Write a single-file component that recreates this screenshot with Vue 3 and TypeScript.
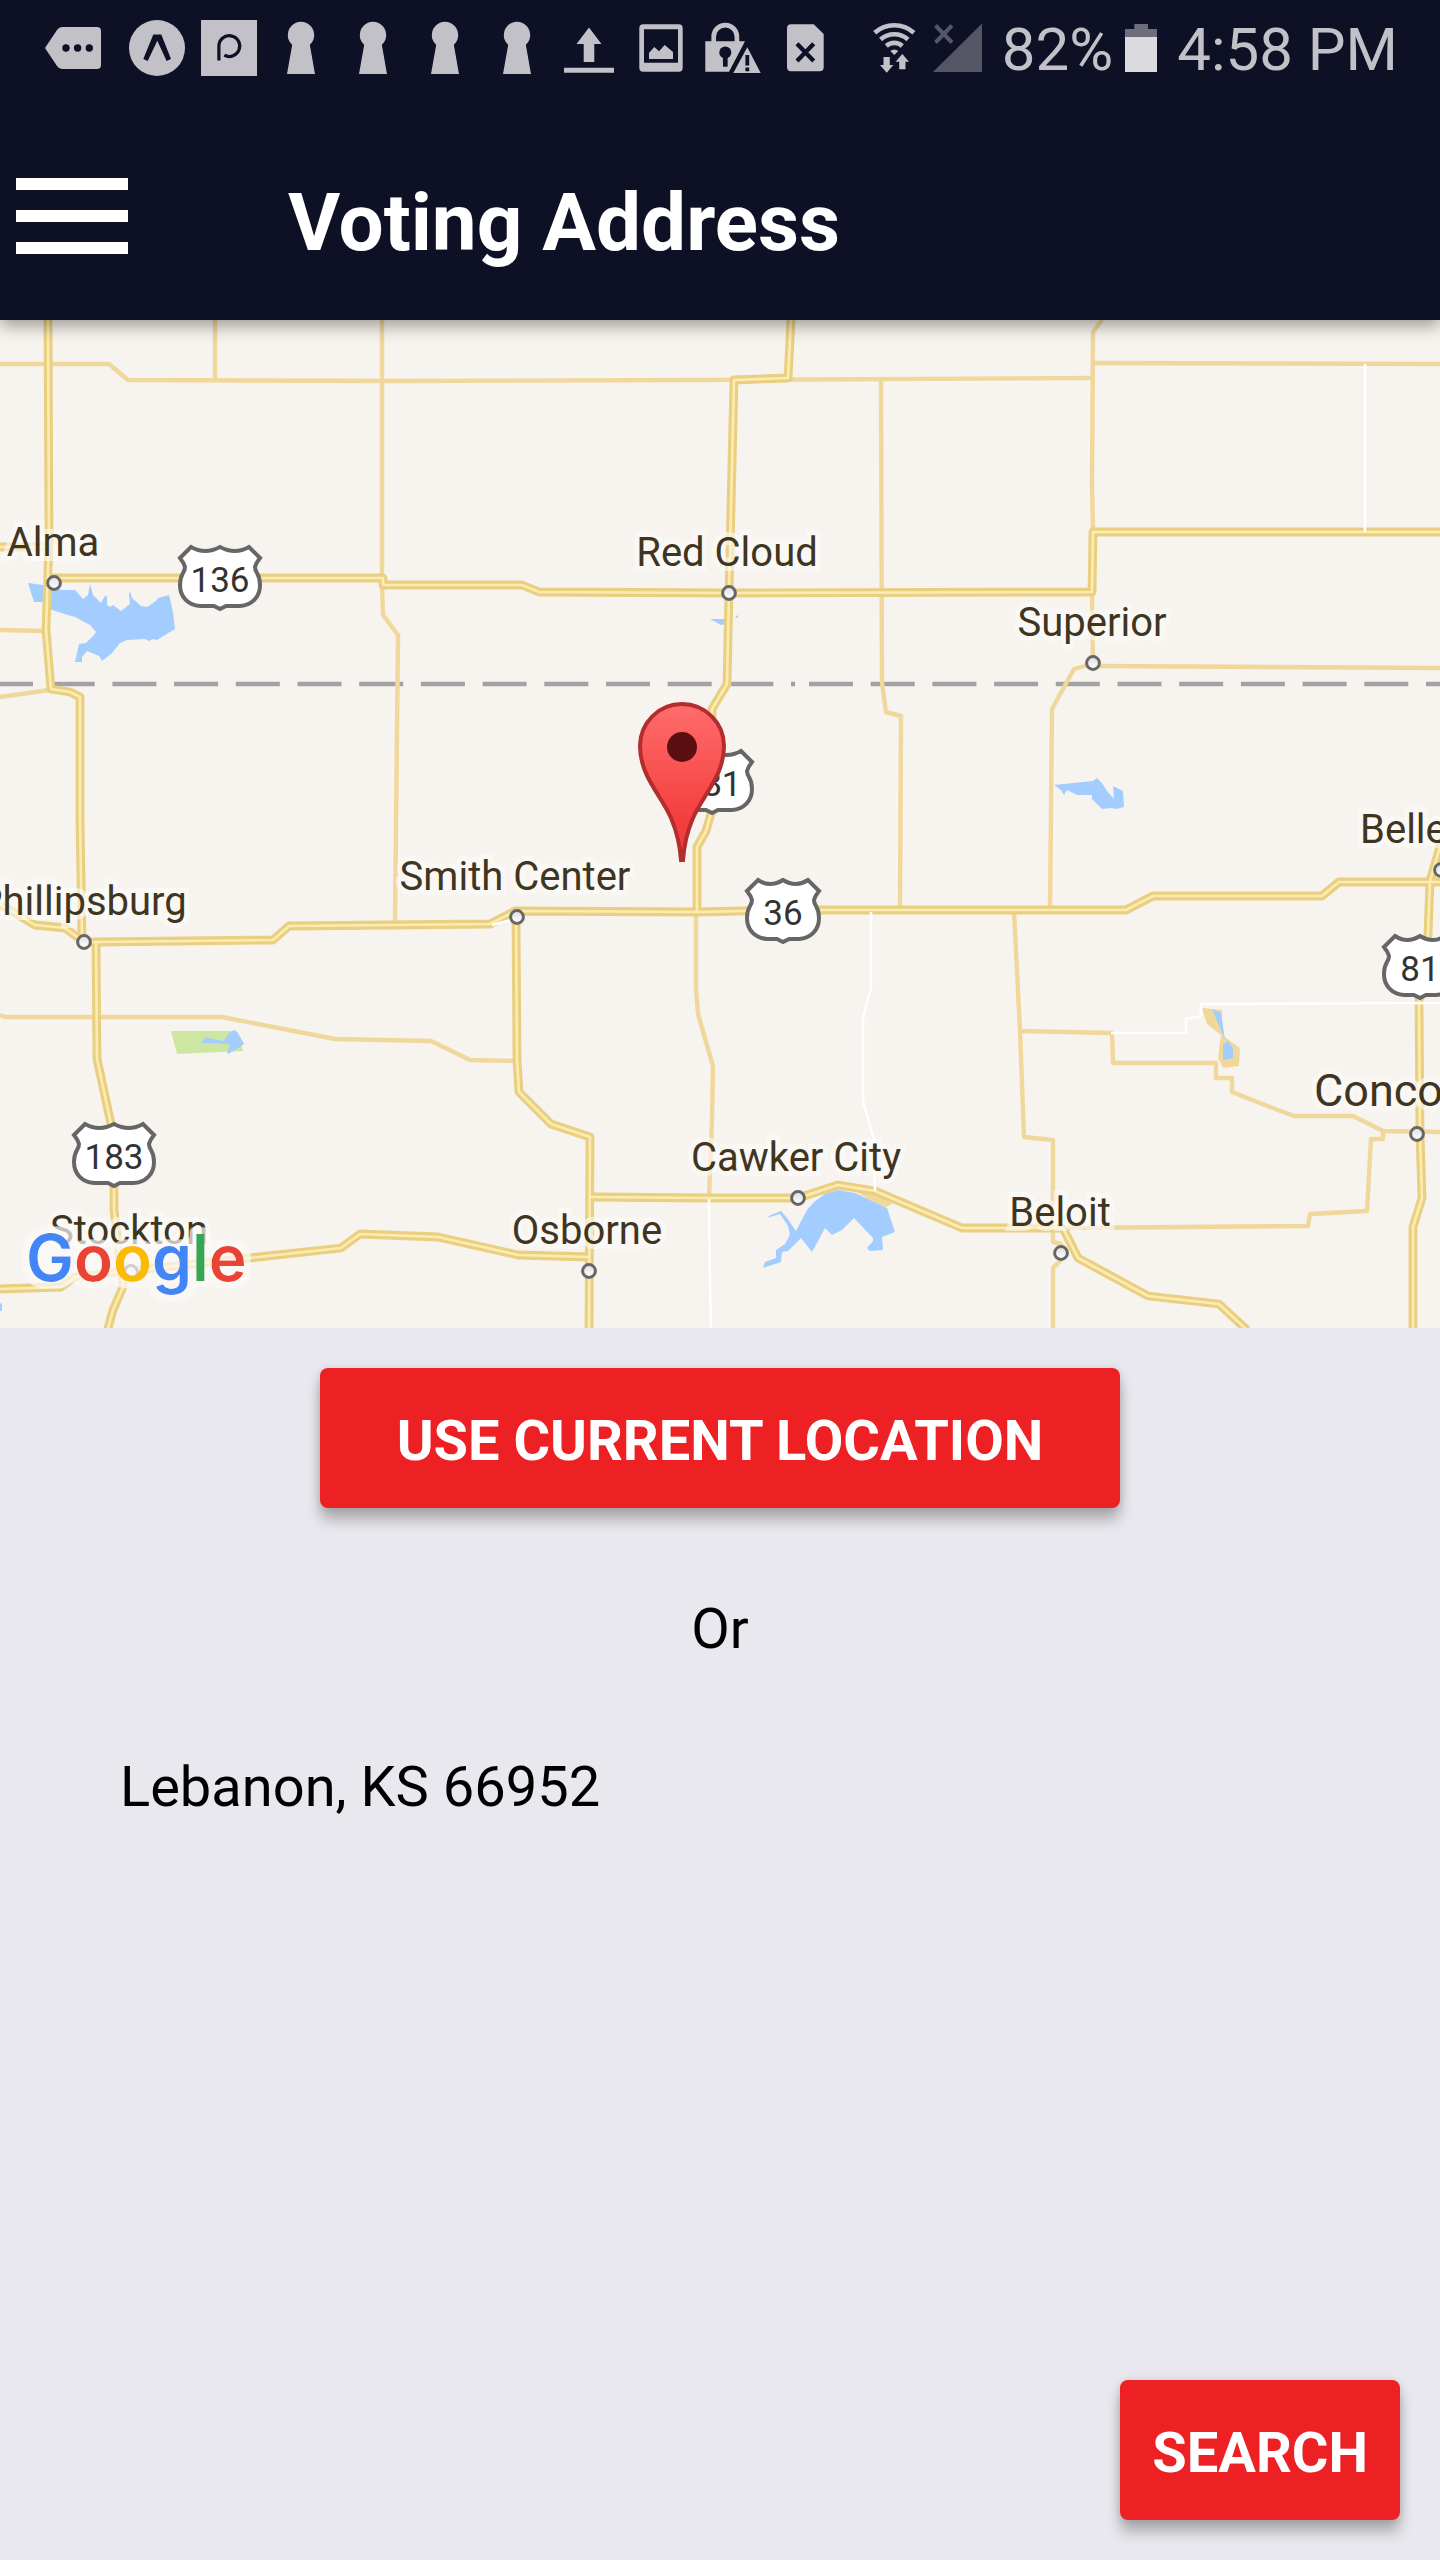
<script setup lang="ts">
import { ref } from 'vue'

interface Town {
  name: string
  x: number
  y: number
  dotX: number
  dotY: number
  anchor?: 'start' | 'middle'
  large?: boolean
}

interface Shield {
  route: string
  x: number
  y: number
}

const address = ref('Lebanon, KS 66952')

const towns: Town[] = [
  { name: 'Alma', x: 53, y: 236, dotX: 54, dotY: 263 },
  { name: 'Red Cloud', x: 727, y: 246, dotX: 729, dotY: 273 },
  { name: 'Superior', x: 1092, y: 316, dotX: 1093, dotY: 343 },
  { name: 'Phillipsburg', x: 82, y: 595, dotX: 84, dotY: 622 },
  { name: 'Smith Center', x: 515, y: 570, dotX: 517, dotY: 597 },
  { name: 'Osborne', x: 587, y: 924, dotX: 589, dotY: 951 },
  { name: 'Cawker City', x: 796, y: 851, dotX: 798, dotY: 878 },
  { name: 'Beloit', x: 1060, y: 906, dotX: 1061, dotY: 933 },
  { name: 'Stockton', x: 129, y: 924, dotX: 131, dotY: 952 },
  { name: 'Belleville', x: 1360, y: 523, dotX: 1441, dotY: 550, anchor: 'start' },
  { name: 'Concordia', x: 1314, y: 786, dotX: 1417, dotY: 814, anchor: 'start', large: true },
]

const shields: Shield[] = [
  { route: '136', x: 220, y: 258 },
  { route: '281', x: 712, y: 462 },
  { route: '36', x: 783, y: 591 },
  { route: '183', x: 114, y: 835 },
  { route: '81', x: 1420, y: 647 },
]

const highways: string[] = [
  'M48 0L49 220L46 310L51 369L70 372L80 377V500L82 618',
  'M0 227H48',
  'M49 258H383V265H522L539 272L730 273L1092 272L1093 212H1440',
  'M791 0L788 58L734 60L729 272L727 364L712 389V490L706 511L697 527V591',
  'M0 584L35 605L65 608L84 622H95L273 620L289 606L490 604L515 591L700 592L783 590L1126 590L1153 576H1322L1339 562H1440',
  'M96 622L97 739L114 818V890L123 967L113 990L107 1012',
  'M0 969L61 967L75 957L341 928L360 914L438 917L518 935L589 937',
  'M516 597L517 740L519 772L551 804L590 817L589 1012',
  'M591 877L710 878H798L838 865L875 871L962 908H1063L1078 938L1148 976L1219 984L1247 1010',
  'M1442 520L1430 561L1427 640L1419 680L1420 815L1422 878L1413 907V1012',
]

const roads: string[] = [
  'M0 44H109L128 60L400 61L700 60L1093 58',
  'M215 0V61',
  'M382 0V265L383 295L398 315L395 602',
  'M0 310L46 311',
  'M0 377L49 370',
  'M881 58L882 363L886 392L901 396L900 590',
  'M1102 0L1093 12L1092 165L1093 212L1092 272L1093 343',
  'M1093 43L1440 44',
  'M1440 348L1100 346L1085 346L1074 349L1052 389L1050 590',
  'M0 695L5 697H222L335 719L431 721L470 740L517 741',
  'M696 592V668L698 694L713 746L712 800L709 878',
  'M1014 591L1020 711L1024 817L1053 820V922L1061 924L1061 940L1053 948V1008',
  'M1020 711L1112 713L1113 743H1216V758H1232V772L1270 787L1294 796H1353L1383 811L1440 812',
  'M1383 811V819H1371L1367 891L1310 894L1308 906L1064 908',
]

const lanes: string[] = [
  'M1365 44V212',
  'M492 605L511 600',
  'M709 879L710 960L711 1008',
  'M871 592V668L863 697V781L874 820L875 871',
  'M1111 713H1186V699L1201 696V684L1440 683',
]

// Outline of a US route shield around the origin; the sides move out for three digits.
function shieldPath(route: string): string {
  const w = route.length > 2 ? 40 : 36
  const c = w - 11
  const m = Math.round(c / 2)
  return (
    `M0-31Q${-m}-23 ${-c}-31L${-w}-20Q${4 - w}-15 ${5 - w}-11Q${5 - w}-8 ${3 - w}-5` +
    `Q${-w} 0 ${-w} 7C${-w} 19 ${8 - w} 27 ${20 - w} 28H-6L0 31L6 28H${w - 20}` +
    `C${w - 8} 27 ${w} 19 ${w} 7Q${w} 0 ${w - 3}-5Q${w - 5}-8 ${w - 5}-11Q${w - 4}-15 ${w}-20L${c}-31Q${m}-23 0-31Z`
  )
}
</script>

<template>
  <div class="screen">
    <header class="top">
      <div class="status">
        <div class="status-left">
          <svg class="icon message" viewBox="0 0 56 56" aria-hidden="true">
            <path d="M0 28L12 10Q14 7 17 7H52q4 0 4 4V45q0 4-4 4H17q-3 0-5-3Z" />
            <g class="cut"><circle cx="21" cy="28" r="3.7" /><circle cx="32.6" cy="28" r="3.7" /><circle cx="44.3" cy="28" r="3.7" /></g>
          </svg>
          <svg class="icon" viewBox="0 0 56 56" aria-hidden="true">
            <circle cx="28" cy="28" r="28" />
            <path class="cut" d="M24.3 14.5h8L42 39l-4.4 2L28.3 20.7L18.7 41l-4.4-2Z" />
          </svg>
          <svg class="icon" viewBox="0 0 56 56" aria-hidden="true">
            <path d="M0 0H56V56H0Z" />
            <path class="cut-line" stroke-width="3.2" d="M17.9 40.5V26.3a10.4 10.4 0 1 1 5.4 8.9" />
          </svg>
          <svg v-for="n in 4" :key="n" class="icon" viewBox="0 0 56 56" aria-hidden="true">
            <circle cx="28" cy="15" r="13.2" />
            <path d="M19.7 22H36.3L42 54H14Z" />
          </svg>
          <svg class="icon" viewBox="0 0 56 56" aria-hidden="true">
            <path d="M28 7.5L40.5 24H33.3V42H22.7V24H15.5ZM3 47.7H53v5H3Z" />
          </svg>
          <svg class="icon" viewBox="0 0 56 56" aria-hidden="true">
            <path fill-rule="evenodd" d="M10.3 4.3H45.7q4 0 4 4V47.7q0 4-4 4H10.3q-4 0-4-4V8.3q0-4 4-4ZM11 9.3V42.7H45V9.3Z" />
            <path d="M16 39V33l5.3-6L26 31.3L31.7 25L40 32V39Z" />
          </svg>
          <svg class="icon" viewBox="0 0 56 56" aria-hidden="true">
            <path d="M.3 21.3H40L24 51.7H.3ZM42.3 27.3L55.7 53H28.3Z" />
            <path class="line" stroke-width="4.7" d="M8.7 22V16.7a11.6 11.6 0 0 1 23.2 0V22" />
            <circle class="cut" cx="20.3" cy="32.5" r="6" />
            <path class="cut-line" stroke-width="4.7" d="M20.3 33V46.7" />
            <path class="cut-line" stroke-width="3.8" d="M42.3 35V45.5M42.3 47.5V51.2" />
          </svg>
          <svg class="icon" viewBox="0 0 56 56" aria-hidden="true">
            <path d="M14 4.3H36.7L46.7 14V47.3q0 4-4 4H14q-4 0-4-4V8.3q0-4 4-4Z" />
            <path class="cut-line" stroke-width="4.3" d="M20 23.7L36.7 41M36.7 23.7L20 41" />
          </svg>
        </div>
        <div class="status-right">
          <div class="network">
            <svg class="icon wifi" viewBox="0 0 44 56" aria-hidden="true">
              <path class="line" stroke-width="4.6" d="M1.7 12.7A29.7 29.7 0 0 1 40.9 12.7M7.6 19.4A20.8 20.8 0 0 1 35 19.4M13.3 25.9A12.2 12.2 0 0 1 29.3 25.9" />
              <path d="M21.3 35L17.3 31Q21.3 28 25.3 31ZM10.5 37H16.8V45H20.4L13.7 52.7L7 45H10.5ZM29.3 34L36 41.7H32.5V49.3H26.2V41.7H22.6Z" />
            </svg>
            <svg class="icon signal" viewBox="0 0 49 56" aria-hidden="true">
              <path d="M0 52L49 3.5V52Z" />
              <path class="no-data" d="M2.5 5.5L19 22.5M19 5.5L2.5 22.5" />
            </svg>
          </div>
          <div class="charge">
            <span class="reading">82%</span>
            <svg class="icon battery" viewBox="0 0 32 56" aria-hidden="true">
              <path class="empty" d="M9.3 4H23V9H32V17H0V9H9.3Z" />
              <path class="full" d="M0 17H32V52H0Z" />
            </svg>
          </div>
          <span class="reading">4:58 PM</span>
        </div>
      </div>
      <div class="bar">
        <button class="menu" type="button" aria-label="Menu">
          <svg viewBox="0 0 112 76" aria-hidden="true"><path d="M0 0H112V12H0ZM0 32H112V44H0ZM0 64H112V76H0Z" /></svg>
        </button>
        <h1>Voting Address</h1>
      </div>
    </header>

    <svg class="map" viewBox="0 0 1440 1008" preserveAspectRatio="xMidYMid slice" role="img" aria-label="Map around Lebanon, Kansas">
      <defs>
        <linearGradient id="pin-fill" x1="0" y1="0" x2="0" y2="1">
          <stop offset="0" stop-color="#ff6c6c" />
          <stop offset="0.75" stop-color="#f43e3e" />
          <stop offset="1" stop-color="#f43a3a" />
        </linearGradient>
        <linearGradient id="dot-fill" x1="0" y1="0" x2="0" y2="1">
          <stop offset="0" stop-color="#dedede" />
          <stop offset="1" stop-color="#ffffff" />
        </linearGradient>
        <filter id="logo-halo" x="-20%" y="-20%" width="140%" height="140%">
          <feMorphology in="SourceAlpha" operator="dilate" radius="6" />
          <feGaussianBlur stdDeviation="2" />
          <feComponentTransfer result="edge"><feFuncA type="linear" slope="4" intercept="-1" /></feComponentTransfer>
          <feFlood flood-color="#fbfaf8" flood-opacity="0.7" />
          <feComposite in2="edge" operator="in" result="halo" />
          <feMerge><feMergeNode in="halo" /><feMergeNode in="SourceGraphic" /></feMerge>
        </filter>
      </defs>

      <g class="border">
        <path d="M-11 364H775" />
        <path d="M791 364H795" />
        <path d="M809 364H1440" />
      </g>

      <path class="park" d="M171 711H237L243 731L177 734Z" />
      <path class="sand" d="M1202 688L1222 690V715L1240 728L1239 746L1223 748L1218 738L1221 715L1207 704ZM850 868L876 871L892 884L886 887L870 880Z" />
      <g class="water">
        <path d="M28 263L43 265L62 270H75L83 279L88 275L90 264L93 275L101 283L105 276H107V285L110 287L113 285L121 291L130 284L129 275L130 271L132 278L141 286L147 287L156 281L158 278L169 275L173 292L175 309L165 315L157 320L153 319L149 321L145 319L127 320L120 323L112 333L102 341L99 336L87 331L82 337V342H75L79 324L86 323L93 316L96 312L90 305L75 297L68 295L52 290L43 282H34Z" />
        <path d="M710 299H727V304L721 305ZM735 297L738 295V298Z" />
        <path d="M1054 465L1073 463L1093 461L1097 458L1102 463L1107 471L1114 479L1113 466L1123 471L1124 487L1116 489L1111 488L1102 489L1092 479V475H1077L1067 470L1064 475L1061 470Z" />
        <path d="M201 723L206 717L213 719L224 721L229 713L234 710L238 713L244 724L235 730L228 734L227 733L230 724Z" />
        <path d="M825 874L838 870L855 873L887 888L895 912L882 917L883 930L870 931L867 928L873 921V918L854 898L842 910L832 915L825 908L812 932L801 918L788 931L782 932L781 942L763 948L765 942L776 938V930L785 924L790 915L788 906L780 894L767 898L771 895L781 891L787 898L796 911L807 890L814 882Z" />
        <path d="M1212 689L1221 693L1225 720ZM1223 725L1228 721L1233 728V738L1223 740ZM0 983L2 984V991H0Z" />
      </g>

      <g class="road"><path v-for="d in roads" :key="d" :d="d" /></g>
      <g class="highway"><path v-for="d in highways" :key="d" :d="d" /></g>
      <g class="highway-center"><path v-for="d in highways" :key="d" :d="d" /></g>
      <g class="lane"><path v-for="d in lanes" :key="d" :d="d" /></g>

      <g v-for="shield in shields" :key="shield.route" :transform="`translate(${shield.x} ${shield.y})`">
        <path class="shield" :d="shieldPath(shield.route)" />
        <text class="route" x="0" y="14">{{ shield.route }}</text>
      </g>

      <g v-for="town in towns" :key="town.name">
        <circle class="dot" :cx="town.dotX" :cy="town.dotY" r="6.4" />
        <text
          class="town"
          :class="{ large: town.large }"
          :x="town.x"
          :y="town.y"
          :text-anchor="town.anchor ?? 'middle'"
        >{{ town.name }}</text>
      </g>

      <path class="pin" d="M640 426a42 42 0 0 1 84 0C724 456 703 475 693 498C687 512 684 526 683 540H681C680 526 677 512 671 498C661 475 640 456 640 426Z" />
      <circle class="pin-hole" cx="682" cy="427" r="15" />

      <text class="logo" x="26" y="961" filter="url(#logo-halo)"><tspan fill="#4285f4">G</tspan><tspan fill="#ea4335">o</tspan><tspan fill="#fbbc05">o</tspan><tspan fill="#4285f4">g</tspan><tspan fill="#34a853">l</tspan><tspan fill="#ea4335">e</tspan></text>
    </svg>

    <main class="form">
      <button class="action locate" type="button">USE CURRENT LOCATION</button>
      <p class="or">Or</p>
      <input v-model="address" class="address" type="text" aria-label="Voting address" />
      <button class="action search" type="button">SEARCH</button>
    </main>
  </div>
</template>

<style>
body {
  background: #e9e8ee;
}
</style>

<style scoped>
.screen {
  display: flex;
  flex-direction: column;
  min-height: 100vh;
  background: #e9e8ee;
  font-family: Roboto, "Liberation Sans", sans-serif;
}

.top {
  position: relative;
  z-index: 1;
  background: #0e1026;
  box-shadow: 0 6px 16px rgba(0, 0, 0, 0.36);
}

.status {
  display: flex;
  align-items: center;
  justify-content: space-between;
  height: 96px;
  padding: 0 42px 0 45px;
  color: #c3c1c8;
  font-size: 60px;
  line-height: 90px;
  white-space: nowrap;
}

.status-left {
  display: flex;
  gap: 16px;
}

.status-right {
  display: flex;
  align-items: center;
  gap: 20px;
}

.network {
  display: flex;
  gap: 16px;
}

.charge {
  display: flex;
  align-items: center;
  gap: 12px;
}

.reading {
  padding-top: 4px;
}

.icon {
  display: block;
  flex: none;
  width: 56px;
  height: 56px;
  fill: #c3c1c8;
}

.message {
  margin-right: 12px;
}

.wifi {
  width: 44px;
}

.signal {
  width: 49px;
  fill: #545565;
}

.battery {
  width: 32px;
}

.line {
  fill: none;
  stroke: #c3c1c8;
}

.cut {
  fill: #0e1026;
}

.cut-line {
  fill: none;
  stroke: #0e1026;
}

.no-data {
  fill: none;
  stroke: #545565;
  stroke-width: 4;
}

.empty {
  fill: #6c6d7d;
}

.full {
  fill: #dadadf;
}

.bar {
  display: flex;
  align-items: center;
  gap: 160px;
  height: 208px;
  padding: 16px 16px 0;
}

.menu {
  padding: 0;
  border: 0;
  background: none;
}

.menu svg {
  display: block;
  width: 112px;
  height: 76px;
  fill: #fff;
}

h1 {
  margin: 0;
  padding-top: 14px;
  color: #fff;
  font-size: 80px;
  font-weight: 700;
  line-height: 96px;
}

.map {
  display: block;
  width: 100%;
  aspect-ratio: 10 / 7;
  background: #f7f3ee;
}

.border path {
  fill: none;
  stroke: #a3a1a4;
  stroke-width: 4.6;
  stroke-dasharray: 44 17.7;
}

.park {
  fill: #cde7a3;
}

.sand {
  fill: #f0d89b;
}

.water {
  fill: #a3cdff;
}

.road,
.highway,
.highway-center,
.lane {
  fill: none;
  stroke-linejoin: round;
}

.road {
  stroke: #f0d79b;
  stroke-width: 4.4;
}

.highway {
  stroke: #e8cf82;
  stroke-width: 8.8;
}

.highway-center {
  stroke: #feebb0;
  stroke-width: 2.6;
}

.lane {
  stroke: #fff;
  stroke-width: 2.6;
}

.shield {
  fill: #fff;
  stroke: #666;
  stroke-width: 4;
}

.route {
  fill: #333;
  font-size: 35px;
  text-anchor: middle;
}

.dot {
  fill: url(#dot-fill);
  stroke: #666;
  stroke-width: 3;
}

.town {
  fill: #40351f;
  stroke: rgba(253, 252, 250, 0.62);
  stroke-width: 10px;
  paint-order: stroke;
  font-size: 40px;
}

.town.large {
  font-size: 45px;
}

.pin {
  fill: url(#pin-fill);
  stroke: #b32c2e;
  stroke-width: 4;
}

.pin-hole {
  fill: #5b0f10;
}

.logo {
  font-family: Inter, "Liberation Sans", sans-serif;
  font-size: 64px;
  font-weight: 600;
}

.form {
  display: flex;
  flex: 1;
  flex-direction: column;
  align-items: center;
  padding: 40px;
}

.action {
  height: 140px;
  border: 0;
  border-radius: 8px;
  background: #ed2024;
  box-shadow: 0 12px 14px rgba(0, 0, 0, 0.26), 0 0 8px rgba(0, 0, 0, 0.12);
  color: #fff;
  font-family: inherit;
  font-size: 56px;
  font-weight: 700;
  line-height: 64px;
}

.locate {
  width: 800px;
  max-width: 100%;
  padding: 6px 0 0;
}

.or {
  margin: 89px 0 0;
  color: #000;
  font-size: 56px;
  line-height: 64px;
}

.address {
  align-self: stretch;
  height: 96px;
  margin: 78px 80px 0;
  padding: 0;
  border: 0;
  background: none;
  color: #000;
  font-family: inherit;
  font-size: 56px;
}

.search {
  align-self: flex-end;
  margin-top: auto;
  padding: 6px 32px 0;
}
</style>
